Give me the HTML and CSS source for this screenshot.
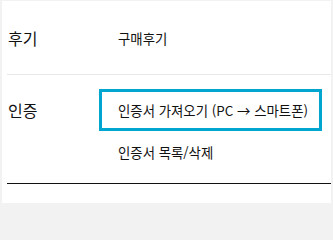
FILE: index.html
```html
<!DOCTYPE html>
<html lang="ko">
<head>
<meta charset="utf-8">
<link rel="stylesheet" href="styles.css">
</head>
<body>
<div class="panel">
  <section class="group group-review">
    <div class="label">후기</div>
    <ul class="items">
      <li class="item">구매후기</li>
    </ul>
  </section>
  <section class="group group-cert">
    <div class="label">인증</div>
    <ul class="items">
      <li class="item item-active">인증서 가져오기 (PC → 스마트폰)</li>
      <li class="item">인증서 목록/삭제</li>
    </ul>
  </section>
</div>
</body>
</html>
```
FILE: styles.css
```css
html, body {
  margin: 0;
  padding: 0;
}
body {
  background: #f2f2f2;
  font-family: "Noto Sans CJK KR", "Noto Sans", sans-serif;
  color: #111;
  width: 333px;
  height: 208px;
  overflow: hidden;
}
.panel {
  margin: 1px 2px 0 2px;
  height: 202px;
  background: #fff;
  padding-left: 5px;
}
.group {
  display: grid;
  grid-template-columns: 92px 1fr;
}
.group-review {
  height: 73px;
  align-items: center;
  border-bottom: 1px solid #e9e9e9;
}
.group-cert {
  padding: 14px 0 10px 0;
  border-bottom: 1px solid #111;
}
.label {
  font-size: 16px;
  line-height: 20px;
  padding-left: 1px;
}
.group-cert .label {
  padding-top: 11px;
}
.items {
  list-style: none;
  margin: 0;
  padding: 0;
  padding-right: 9px;
}
.item {
  font-size: 13.4px;
  line-height: 20px;
  padding: 0 0 0 19px;
}
.group-cert .item {
  height: 42px;
  display: flex;
  align-items: center;
  box-sizing: border-box;
}
.item-active {
  border: 3px solid #00a6cf;
  padding-left: 16px;
}
```
